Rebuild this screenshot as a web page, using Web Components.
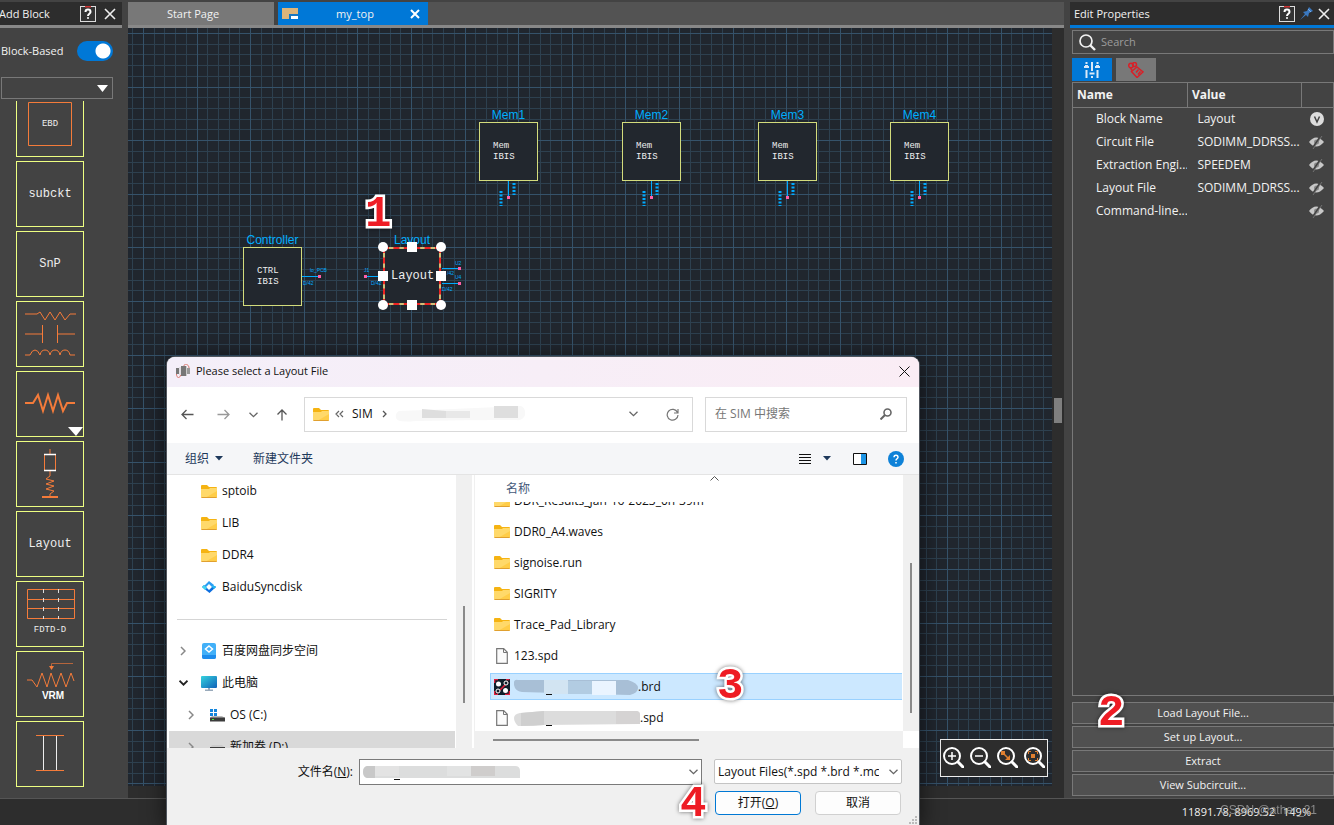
<!DOCTYPE html>
<html lang="zh-CN">
<head>
<meta charset="utf-8">
<title>Block Editor</title>
<style>
  body { margin: 0; font: 11px/16px "Open Sans", "Noto Sans CJK SC", sans-serif; }
</style>
</head>
<body>
<app-shell></app-shell>

<script>
const base = `<style>
  *, *::before, *::after { box-sizing: border-box; }
  button, input, select { font: inherit; color: inherit; margin: 0; padding: 0; border: 0; background: none; border-radius: 0; outline: none; }
  svg { display: block; flex: none; }
  ul { list-style: none; margin: 0; padding: 0; }
</style>`;

function define(name, html, setup) {
  const template = document.createElement('template');
  template.innerHTML = base + html;
  customElements.define(name, class extends HTMLElement {
    constructor() {
      super();
      this.attachShadow({ mode: 'open' }).append(template.content.cloneNode(true));
    }
    connectedCallback() { if (setup) setup(this, this.shadowRoot); }
  });
}

/* ---------- icon library ---------- */
const lens = '<circle cx="9" cy="9" r="8" fill="none" stroke="#fff" stroke-width="2"/><path d="M15 15l5 5" stroke="#fff" stroke-width="3" stroke-linecap="round"/>';
const icons = {
  help: [16, 16, '<rect x=".5" y=".5" width="15" height="15" fill="#333" stroke="#ddd"/><path d="M5 0h6v1.500H5z" fill="#c33"/><path d="M5.500 6c0-3.200 5-3.200 5 0 0 1.700-2.500 1.800-2.500 4M8 11.300v1.500" fill="none" stroke="#fff" stroke-width="2"/>'],
  close: [12, 12, '<path d="M1 1l10 10M11 1L1 11" stroke="#eee" stroke-width="1.600"/>'],
  closeTab: [10, 10, '<path d="M1 1l8 8M9 1L1 9" stroke="#fff" stroke-width="2"/>'],
  closeDark: [11, 11, '<path d="M.5 .5l10 10M10.500 .5l-10 10" stroke="#111"/>'],
  doc: [16, 12, '<path d="M0 0h16v6H7v5H0z" fill="#deb57a"/><path d="M8 11V7h8" fill="none" stroke="#37a" stroke-width="1"/><path d="M9 8h7v3H9z" fill="#fff"/>'],
  pin: [13, 13, '<path d="M0 13l5-6-2-2 4-1L9 0l4 4-4 2-1 4-2-2z" fill="#3a78c0"/><path d="M8 2l3 3" stroke="#7ab0e8"/>'],
  search: [17, 17, '<circle cx="7" cy="7" r="6" fill="none" stroke="#f2f2f2" stroke-width="1.700"/><path d="M11 11l5 5" stroke="#f2f2f2" stroke-width="2.400"/>'],
  sliders: [16, 16, '<path d="M2.500 0v2M2.500 8v8M8 0v9M8 14v2M13.500 0v2M13.500 8v8" stroke="#dbe9f8" stroke-width="2"/><path d="M0 5h5M1 4h3M5.500 11.500h5M11 5h5M12 4h3" stroke="#dbe9f8" stroke-width="2"/>'],
  circuit: [16, 16, '<g fill="none" stroke="#d82028" stroke-width="1.500"><path d="M9 5l6 5-6 5.500-5.500-6z"/><path d="M8 10.500l2.500-3M10 12.500l2.500-3"/><circle cx="3" cy="3.500" r="2.300"/><circle cx="6.500" cy="2.500" r="2"/><path d="M2.500 6l2 3"/></g>'],
  visible: [14, 14, '<circle cx="7" cy="7" r="7" fill="#ddd"/><path d="M4.500 4.500L7 10l2.500-5.500" fill="none" stroke="#444" stroke-width="1.500"/>'],
  hidden: [16, 14, '<path d="M0 7q7-9 15 0-8 9-15 0z" fill="#c8c8c8"/><circle cx="7.500" cy="7" r="2.500" fill="#888"/><path d="M12.500 0L3 14" stroke="#434343" stroke-width="2"/><path d="M13 1L4 14" stroke="#888" stroke-width=".7"/>'],
  zoomIn: [21, 21, lens + '<path d="M5 9h8M9 5v8" stroke="#fff" stroke-width="1.500"/>'],
  zoomOut: [21, 21, lens + '<path d="M5 9h8" stroke="#fff" stroke-width="1.500"/>'],
  zoomWin: [21, 21, lens + '<path d="M6 6l6 6" stroke="#e08030" stroke-width="1.500"/><path d="M4 4h4v4H4zM13 8v5H8z" fill="#e08030"/>'],
  zoomFit: [21, 21, lens + '<path d="M7 7h4v4H7z" fill="#e08030"/><path d="M4.500 7V4.500H7M11 4.500h2.500V7M13.500 11v2.500H11M7 13.500H4.500V11" fill="none" stroke="#e08030"/>'],
  app: [16, 14, '<path d="M1 4h3v6H1zM6 2h5v10H6z" fill="#777"/><path d="M12 4h3v6h-3z" fill="#999"/><path d="M5 3v8M11.500 2v10" stroke="#ccc"/><path d="M9 2c0-3 5-2 5 2M1.500 10c0 5 4 4 4 1" fill="none" stroke="#d9776c"/>'],
  back: [13, 11, '<path d="M12.500 5.500H1M5.500 1L1 5.500 5.500 10" fill="none" stroke="#555" stroke-width="1.300"/>'],
  forward: [13, 11, '<path d="M.5 5.500H12M7.500 1L12 5.500 7.500 10" fill="none" stroke="#999" stroke-width="1.300"/>'],
  up: [12, 12, '<path d="M6 11.500V1M1.500 5.500L6 1l4.500 4.500" fill="none" stroke="#555" stroke-width="1.300"/>'],
  chevron: [9, 6, '<path d="M.5 .7l4 4 4-4" fill="none" stroke="#666" stroke-width="1.300"/>'],
  chevronUp: [9, 5, '<path d="M.5 4.500l4-4 4 4" fill="none" stroke="#555"/>'],
  chevronBold: [9, 6, '<path d="M.5 .7l4 4 4-4" fill="none" stroke="#222" stroke-width="1.800"/>'],
  chevronRight: [6, 10, '<path d="M1 1l4 4-4 4" fill="none" stroke="#888" stroke-width="1.500"/>'],
  crumb: [5, 8, '<path d="M1 1l3 3-3 3" fill="none" stroke="#555" stroke-width="1.300"/>'],
  crumbs: [9, 8, '<path d="M4 1L1 4l3 3M8 1L5 4l3 3" fill="none" stroke="#666" stroke-width="1.200"/>'],
  refresh: [13, 13, '<path d="M11.500 4.500A5.400 5.400 0 1 0 12 7M12 1v4H8" fill="none" stroke="#777" stroke-width="1.200"/>'],
  find: [12, 12, '<circle cx="7.500" cy="4.500" r="3.500" fill="none" stroke="#666" stroke-width="1.600"/><path d="M5 7l-4.500 4.500" stroke="#666" stroke-width="2"/>'],
  caret: [8, 5, '<path d="M0 0h8L4 4.500z" fill="#1e395b"/>'],
  caretWhite: [11, 7, '<path d="M0 0h11L5.500 7z" fill="#fff"/>'],
  lines: [12, 11, '<path d="M0 1h12M0 4h12M0 7h12M0 10h12" stroke="#111" stroke-width="1" shape-rendering="crispEdges"/>'],
  pane: [14, 12, '<path d="M.5 .5h13v11H.5z" fill="#fff" stroke="#111"/><path d="M8 1h5v10H8z" fill="#1c95e6"/>'],
  info: [16, 16, '<circle cx="8" cy="8" r="8" fill="#0f82d8"/><path d="M6 6.300c0-2.900 4-2.900 4 0 0 1.500-2 1.500-2 3.200M8 11v1.600" fill="none" stroke="#fff" stroke-width="1.500"/>'],
  folder: [16, 13, '<path d="M0 1q0-1 1-1h5l2 2h7q1 0 1 1v9H0z" fill="#f5b312"/><path d="M0 4h8l1-1h7v9q0 1-1 1H1q-1 0-1-1z" fill="#ffd96a"/><path d="M16 6v6q0 1-1 1H4z" fill="#ffcd48"/><path d="M.5 12.500h15" stroke="#e0a030"/>'],
  file: [12, 16, '<path d="M.7 .7h7l3.600 3.600v11H.7z" fill="#fbfbfb" stroke="#777" stroke-width="1.200"/><path d="M7.500 1v3.500H11" fill="none" stroke="#777"/>'],
  board: [16, 16, '<path d="M0 0h16v16H0z" fill="#101e2a"/><path d="M.5 4V.5H4M12 .5h3.500M15.500 12v3.500H11M4 15.500H.5V12M3 14L14 3" fill="none" stroke="#e01f3c" stroke-width="1.500"/><circle cx="4.500" cy="5" r="2.500" fill="#fff"/><circle cx="11.500" cy="11.500" r="2.500" fill="#fff"/><circle cx="12" cy="4" r="2" fill="#101e2a" stroke="#fff"/><circle cx="4" cy="12" r="2" fill="#101e2a" stroke="#fff"/>'],
  sync: [14, 12, '<path d="M2 5l5-5 5 4-2 2-3-3-3 3z" fill="#2a9df4"/><path d="M0 6l2-2 5 5 3-3 3-1 1 1-6.500 6z" fill="#0e6fe0"/><path d="M0 6l2-2 3 3-2 2z" fill="#40d4f0"/><path d="M11 4l3 2-2 2-2-2z" fill="#20b8f0"/>'],
  syncDrive: [14, 16, '<rect width="14" height="16" rx="2" fill="#42b0f8"/><path d="M0 12h14v2q0 2-2 2H2q-2 0-2-2z" fill="#1e8cec"/><path d="M7 3l3.500 3L7 9 3.500 6z" fill="none" stroke="#fff" stroke-width="1.500"/>'],
  computer: [16, 15, '<defs><linearGradient id="g" x2="1" y2="1"><stop stop-color="#35d3de"/><stop offset="1" stop-color="#1161b8"/></linearGradient></defs><rect width="16" height="12" rx="1" fill="url(#g)"/><path d="M7 12h2v2H7zM4 13.500h8V15H4z" fill="#9ab"/>'],
  osDrive: [16, 13, '<path d="M1 0h3v3H1zM5 0h3v3H5zM1 4h3v3H1zM5 4h3v3H5z" fill="#1485dc"/><path d="M3 7h10l3 2H1z" fill="#bbb"/><path d="M1 8.500h15v4H1z" fill="#3c3c3c"/><path d="M3 10.500h2" stroke="#4e4"/>'],
  drive: [16, 13, '<path d="M3 4h10l3 3H1z" fill="#ccc"/><path d="M1 6h15v5H1z" fill="#3c3c3c"/>'],
};
define('ui-icon', `<style>:host { display: inline-block; flex: none; vertical-align: middle; }</style>`, (host, root) => {
  const icon = icons[host.getAttribute('name')];
  if (!icon) return;
  const [w, h, body] = icon;
  root.innerHTML += `<svg width="${w}" height="${h}" viewBox="0 0 ${w} ${h}" aria-hidden="true">${body}</svg>`;
});

/* ---------- palette ---------- */
const symbols = {
  ebd: '<path d="M11.500 10.500h43v43h-43z"/>',
  rcl: '<path d="M8 12h12l3-2 5 8 5-8 5 8 5-8 5 8 5-6h6"/><path d="M8 32h17.500M25.500 23v18M40.500 23v18M40.500 32H58"/><path d="M8 53h5q2-5 5-5t5 5q1-5 5-5t5 5q1-5 5-5t5 5q1-5 5-5t5 5h5"/>',
  res: '<g stroke-width="2"><path d="M8 31h8l5-8 5 16 5-16 5 16 5-16 5 16 4-8h8"/></g><path d="M51 55h15l-7 9z" fill="#fff" stroke="none"/>',
  probe: '<path d="M33 7v5M27.500 13v16M38.500 13v16" /><path d="M33 29v5l-4 3 8 2-8 3 8 2-8 3 8 2-4 3v3" /><path d="M25 55h16" stroke-width="2"/><path d="M27 12.500h12M27 28.500h12" stroke="#fff" stroke-width="1.500"/>',
  fdtd: '<path d="M10.500 7.500h47v29h-47zM10 17.500h48M10 26.500h48"/><path d="M26.500 7v30M41.500 7v30" stroke="#ddd" stroke-dasharray="4 5"/>',
  vrm: '<path d="M10 28h5l5 7 5-14 5 14 4-14 5 14 5-14 5 14 5-14 3 8"/><path d="M56 11.500H34.500V15" stroke="#b5653c"/><path d="M32 14h5l-2.500 4z" fill="#f47b3a" stroke="none"/>',
  pair: '<path d="M26.500 14v34M39.500 14v34" stroke="#eee"/><path d="M19 13.500h28M19 48.500h28"/>',
  none: '',
};
define('palette-block', `<style>
  :host { display: block; width: 68px; height: 66px; flex: none; }
  button { display: grid; place-items: center; width: 100%; height: 100%; border: 1px solid #eeff82; color: #eee; font: 12px/16px "Liberation Mono", monospace; }
  button > * { grid-area: 1 / 1; }
  :host([small]) button { font-size: 9px; }
  :host([low]) .label { align-self: end; padding-bottom: 8px; }
  :host([strong]) .label { padding: 0 0 12px 6px; font: bold 10px/16px "Liberation Sans", sans-serif; color: #fff; }
</style>
<button type="button"><svg width="66" height="64" fill="none" stroke="#f47b3a"></svg><span class="label"><slot></slot></span></button>`,
(host, root) => { root.querySelector('svg').innerHTML = symbols[host.getAttribute('symbol') || 'none']; });

define('panel-header', `<style>
  :host { display: flex; align-items: center; gap: var(--tool-gap, 8px); height: 26px; margin-top: 2px; padding: 0 var(--tool-end, 6px) 0 4px; background: #2d2d2d; border-bottom: 3px solid var(--rule, #888); color: #f2f2f2; }
  h2 { flex: 1; margin: 0; font: inherit; white-space: nowrap; }
</style><h2><slot></slot></h2><slot name="tools"></slot>`);

define('block-palette', `<style>
  :host { display: flex; flex-direction: column; min-height: 0; padding-right: 6px; background: #434343; color: #f2f2f2; overflow: hidden; }
  panel-header { padding-left: 0; }
  panel-header span { margin-left: -1px; }
  .mode { display: flex; align-items: center; justify-content: space-between; height: 45px; padding: 0 9px 0 1px; }
  .mode input { appearance: none; width: 36px; height: 20px; border-radius: 10px; background: radial-gradient(circle at 26px 10px, #fff 7px, #0078d7 8px); }
  .filter { position: relative; display: block; margin: 4px 9px 0 1px; }
  .filter select { appearance: none; display: block; width: 100%; height: 22px; border: 1px solid #787878; }
  .filter ui-icon { position: absolute; right: 5px; top: 8px; pointer-events: none; }
  .list { flex: 1; min-height: 0; margin-top: 2px; overflow: hidden; }
  .blocks { display: flex; flex-direction: column; gap: 4px; margin: -10px 0 0 16px; }
</style>
<panel-header><span>Add Block</span><ui-icon slot="tools" name="help"></ui-icon><ui-icon slot="tools" name="close"></ui-icon></panel-header>
<div class="mode"><label for="mode">Block-Based</label><input id="mode" type="checkbox" role="switch" checked></div>
<label class="filter"><select aria-label="Block filter"><option></option></select><ui-icon name="caretWhite"></ui-icon></label>
<div class="list"><div class="blocks">
  <palette-block symbol="ebd" small>EBD</palette-block>
  <palette-block>subckt</palette-block>
  <palette-block>SnP</palette-block>
  <palette-block symbol="rcl"></palette-block>
  <palette-block symbol="res"></palette-block>
  <palette-block symbol="probe"></palette-block>
  <palette-block>Layout</palette-block>
  <palette-block symbol="fdtd" small low>FDTD-D</palette-block>
  <palette-block symbol="vrm" low strong>VRM</palette-block>
  <palette-block symbol="pair"></palette-block>
</div></div>`);

/* ---------- document tabs ---------- */
define('doc-tabs', `<style>
  :host { display: flex; height: 26px; margin-top: 2px; gap: 4px; border-bottom: 3px solid #888; color: #f2f2f2; background: #535353; }
  button { display: flex; align-items: center; justify-content: center; background: #787878; }
  .start { width: 146px; padding-right: 16px; box-shadow: 4px 0 #434343; }
  .open { width: 150px; padding: 0 8px 0 4px; background: #0078d7; }
  .open span { flex: 1; text-align: center; padding-left: 2px; }
</style>
<button type="button" class="start">Start Page</button>
<button type="button" class="open"><ui-icon name="doc"></ui-icon><span>my_top</span><ui-icon name="closeTab"></ui-icon></button>`);

/* ---------- canvas ---------- */
const pins = {
  mem: '<path d="M29.500 59v16" stroke="#0af"/><path d="M28 74h3v3h-3z" fill="#ff5fa8"/><path d="M35 61v12M22 69v15" stroke="#0af" stroke-width="3" stroke-dasharray="2 1.500"/>',
  ctrl: '<path d="M59 29.500h17" stroke="#0af"/><path d="M75 28h3v3h-3z" fill="#ff5fa8"/><text x="67" y="25">lo_PCB</text><text x="60" y="38">D/42</text>',
  layout: '<path d="M-17 29.500H0M59 21.500h17M59 36.500h17" stroke="#0af"/><path d="M-19 28h3v3h-3zM75 20h3v3h-3zM75 35h3v3h-3z" fill="#ff5fa8"/><text x="-19" y="25">J1</text><text x="-12" y="38">D/42</text><text x="72" y="18">U2</text><text x="72" y="32">U4</text><text x="64" y="28">/42</text><text x="59" y="44">D/42</text>',
};
define('canvas-node', `<style>
  :host { position: absolute; width: 59px; height: 59px; }
  .name { position: absolute; inset: auto 50% 100% auto; transform: translateX(50%); font: 12px/14px "Liberation Sans", sans-serif; color: #00aeff; white-space: nowrap; }
  .box { display: grid; place-items: center start; width: 100%; height: 100%; padding-left: 13px; border: 1px solid #d3dc7c; background: #22272e; color: #eee; font: 9px/11px "Liberation Mono", monospace; white-space: pre; }
  :host([selected]) { width: 58px; height: 58px; }
  :host([selected]) .box { padding-left: 6px; font-size: 12px; border: 2px dashed #ee2222; background: linear-gradient(#22272e, #22272e) padding-box, #cfc078 border-box; }
  svg { position: absolute; inset: 0 auto auto 0; overflow: visible; fill: none; }
  text { font: 5px "Liberation Sans", sans-serif; fill: #0af; }
</style>
<div class="box"><slot></slot></div><svg width="59" height="59"></svg><div class="name"></div><svg class="grips" width="59" height="59"></svg>`, (host, root) => {
  host.style.left = host.getAttribute('x') + 'px';
  host.style.top = host.getAttribute('y') + 'px';
  root.querySelector('.name').textContent = host.getAttribute('label');
  root.querySelector('svg').innerHTML = pins[host.getAttribute('pins')];
  if (host.hasAttribute('selected')) {
    const stops = [0, 29, 58];
    let grips = '';
    for (const x of stops) for (const y of stops) {
      if (x === 29 && y === 29) continue;
      grips += x === 29 || y === 29
        ? `<rect x="${x - 5}" y="${y - 5}" width="10" height="10" fill="#fff"/>`
        : `<circle cx="${x}" cy="${y}" r="5" fill="#fff"/>`;
    }
    root.querySelector('.grips').innerHTML = grips;
  }
});

define('zoom-bar', `<style>
  :host { display: flex; align-items: center; gap: 6px; height: 38px; padding: 0 2px 2px; border: 1px solid #eee; background: #2d2d2d; box-sizing: border-box; }
  button { display: block; }
</style>
<button type="button" aria-label="Zoom in"><ui-icon name="zoomIn"></ui-icon></button>
<button type="button" aria-label="Zoom out"><ui-icon name="zoomOut"></ui-icon></button>
<button type="button" aria-label="Zoom to area"><ui-icon name="zoomWin"></ui-icon></button>
<button type="button" aria-label="Zoom to fit"><ui-icon name="zoomFit"></ui-icon></button>`);

define('design-canvas', `<style>
  :host { flex: 1; min-height: 0; display: flex; background: #2d2d2d; padding-bottom: 12px; }
  .sheet { position: relative; flex: 1; overflow: hidden; background: #20262e; }
  .grid { width: 100%; height: 100%; shape-rendering: crispEdges; fill: none; }
  .minor { stroke: #2d404f; } .major { stroke: #35526a; }
  .rail { width: 12px; display: grid; place-items: center; padding-top: 7px; }
  .handle { width: 8px; height: 25px; background: #7f7f7f; }
  zoom-bar { position: absolute; right: 4px; bottom: 9px; }
</style>
<div class="sheet"><svg class="grid"><path class="minor"/><path class="major"/></svg>
  <canvas-node x="351" y="94" label="Mem1" pins="mem">Mem
IBIS</canvas-node>
  <canvas-node x="494" y="94" label="Mem2" pins="mem">Mem
IBIS</canvas-node>
  <canvas-node x="630" y="94" label="Mem3" pins="mem">Mem
IBIS</canvas-node>
  <canvas-node x="762" y="94" label="Mem4" pins="mem">Mem
IBIS</canvas-node>
  <canvas-node x="115" y="219" label="Controller" pins="ctrl">CTRL
IBIS</canvas-node>
  <canvas-node x="255" y="219" label="Layout" pins="layout" selected>Layout</canvas-node>
  <zoom-bar></zoom-bar>
</div><div class="rail"><div class="handle"></div></div>`, (host, root) => {
  const step = 10.72, reach = 4000;
  let minor = '', major = '';
  for (let i = -1; i * step < reach; i++) {
    const x = Math.round(15 + i * step) + .5, y = Math.round(5 + i * step) + .5;
    const d = `M${x} 0V${reach}M0 ${y}H${reach}`;
    if (i % 5) minor += d; else major += d;
  }
  root.querySelector('.minor').setAttribute('d', minor);
  root.querySelector('.major').setAttribute('d', major);
});

/* ---------- properties ---------- */
define('properties-panel', `<style>
  :host { display: flex; flex-direction: column; min-height: 0; margin-left: 6px; background: #434343; color: #f2f2f2; }
  panel-header { --rule: #0078d7; --tool-gap: 5px; --tool-end: 4px; }
  .content { flex: 1; min-height: 0; display: flex; flex-direction: column; padding: 2px 0 2px 2px; }
  .search { display: flex; align-items: center; gap: 5px; height: 24px; padding: 0 6px; border: 1px solid #787878; }
  .search input { flex: 1; min-width: 0; }
  .search input::placeholder { color: #9c9c9c; opacity: 1; }
  .views { display: flex; gap: 4px; margin: 4px 0 1px; }
  .views button { display: grid; place-items: center; width: 40px; height: 23px; background: #787878; }
  .views button:first-child { background: #0078d7; }
  .props { flex: 1; min-height: 0; border: 1px solid #787878; }
  table { width: 100%; table-layout: fixed; border-collapse: collapse; font-size: 12px; }
  th { height: 24px; padding: 0 4px; border-bottom: 1px solid #787878; text-align: left; font-weight: 700; }
  th + th { border-left: 1px solid #787878; }
  td { height: 23px; padding: 0 4px 0 10px; overflow: hidden; white-space: nowrap; }
  td:first-child { padding: 0 0 0 23px; }
  td:last-child { padding: 0; text-align: center; line-height: 1; }
  .actions { display: grid; gap: 2px; margin-top: 6px; }
  .actions button { height: 22px; border: 1px solid #787878; background: #505050; }
</style>
<panel-header>Edit Properties<ui-icon slot="tools" name="help"></ui-icon><ui-icon slot="tools" name="pin"></ui-icon><ui-icon slot="tools" name="close"></ui-icon></panel-header>
<div class="content">
  <label class="search"><ui-icon name="search"></ui-icon><input type="text" placeholder="Search" aria-label="Search"></label>
  <div class="views"><button type="button" aria-label="Properties"><ui-icon name="sliders"></ui-icon></button><button type="button" aria-label="Circuit"><ui-icon name="circuit"></ui-icon></button></div>
  <div class="props"><table>
    <colgroup><col style="width:44%"><col style="width:44%"><col></colgroup>
    <thead><tr><th>Name</th><th>Value</th><th></th></tr></thead>
    <tbody>
      <tr><td>Block Name</td><td>Layout</td><td><ui-icon name="visible"></ui-icon></td></tr>
      <tr><td>Circuit File</td><td>SODIMM_DDRSS...</td><td><ui-icon name="hidden"></ui-icon></td></tr>
      <tr><td>Extraction Engi...</td><td>SPEEDEM</td><td><ui-icon name="hidden"></ui-icon></td></tr>
      <tr><td>Layout File</td><td>SODIMM_DDRSS...</td><td><ui-icon name="hidden"></ui-icon></td></tr>
      <tr><td>Command-line...</td><td></td><td><ui-icon name="hidden"></ui-icon></td></tr>
    </tbody>
  </table></div>
  <div class="actions">
    <button type="button">Load Layout File...</button>
    <button type="button">Set up Layout...</button>
    <button type="button">Extract</button>
    <button type="button">View Subcircuit...</button>
  </div>
</div>`);

define('status-bar', `<style>
  :host { position: relative; box-sizing: border-box; display: flex; align-items: center; justify-content: flex-end; gap: 8px; height: 27px; padding-right: 23px; border-top: 1px solid #555; background: #2d2d2d; color: #f2f2f2; }
  .credit { position: absolute; right: 17px; top: 2px; font: 12px/18px "Liberation Sans", sans-serif; color: #a0a0a0; opacity: .8; }
</style><span>11891.78, 8969.52</span><span>149%</span><span class="credit">CSDN @ather_21</span>`);

define('step-marker', `<style>
  :host { position: absolute; font: bold 44px/46px "Liberation Mono", monospace; color: #ee1c24; -webkit-text-stroke: 5px #fff; paint-order: stroke fill; filter: drop-shadow(0 0 2px #0008); pointer-events: none; }
</style><slot></slot>`);

/* ---------- file dialog ---------- */
define('tree-item', `<style>
  :host { box-sizing: border-box; display: flex; align-items: center; gap: 5px; height: 32px; padding-left: 34px; }
  ui-icon { width: 16px; display: grid; place-items: center; }
  .twist { width: 10px; margin: 0 8px 0 -23px; }
  :host([nested]) { padding-left: 42px; }
  :host([current]) { margin: 0 1px 0 2px; padding-left: 40px; background: #d9d9d9; }
</style><slot></slot>`, (host, root) => {
  const twist = host.getAttribute('twist');
  root.querySelector('slot').insertAdjacentHTML('beforebegin',
    (twist ? `<ui-icon class="twist" name="${twist}"></ui-icon>` : '') + `<ui-icon name="${host.getAttribute('icon')}"></ui-icon>`);
});
define('file-row', `<style>
  :host { box-sizing: border-box; display: flex; align-items: center; gap: 4px; height: 27px; padding-left: 3px; border: 1px solid transparent; white-space: nowrap; }
  :host([selected]) { background: #cce8ff; border-color: #99d1ff; border-right: 0; }
  ui-icon { width: 16px; display: grid; place-items: center; }
  .name { display: flex; align-items: center; }
</style><span class="name"><slot></slot></span>`, (host, root) => {
  root.querySelector('.name').insertAdjacentHTML('beforebegin', `<ui-icon name="${host.getAttribute('icon')}"></ui-icon>`);
});

const smudges = {
  path: [131, 18, '<path d="M4 6q60-2 122-5 5 2 4 9-2 6-9 5-50 0-100 1Q2 18 1 13t3-7z" fill="#f8f8f8"/><path d="M27 4l24 2v7H27zM99 1h24v12H99z" fill="#dedede"/><path d="M51 6h24v7H51z" fill="#e8e8e8"/>'],
  brd: [124, 16, '<path d="M4 1h110q10 3 10 8t-8 7l-40-1-68-2Q1 12 0 6t4-5z" fill="#a8bfd6"/><path d="M30 1h24v14H30z" fill="#d2e4f2"/><path d="M54 2h24v13H54z" fill="#b2cce2"/><path d="M78 2h24v14H78z" fill="#eaf4ff"/><path d="M32 15.500h6" stroke="#111"/>'],
  spd: [126, 16, '<path d="M6 3L30 1h92q4 0 4 4v9L30 15q-20 2-26 1Q0 12 0 8t6-5z" fill="#dcdcdc"/><path d="M7 3l23-2v14L7 16z" fill="#cfcfcf"/><path d="M102 1h20q4 0 4 4v9h-24z" fill="#d5d3d3"/><path d="M32 15.500h6" stroke="#111"/>'],
  name: [158, 15, '<path d="M4 1h148q5 0 5 5v7H4Q0 12 0 7t4-6z" fill="#dcdddd"/><path d="M4 1h8v12H4Q0 12 0 7t4-6z" fill="#c8c8c8"/><path d="M12 1h24v10H12z" fill="#e3e3e3"/><path d="M84 1h24v10H84z" fill="#e2e3e3"/><path d="M108 1h24v10h-24z" fill="#cfcdcc"/><path d="M31 14.500h6" stroke="#111"/>'],
};
define('blur-patch', `<style>:host { display: block; flex: none; }</style>`, (host, root) => {
  const [w, h, body] = smudges[host.getAttribute('kind')];
  root.innerHTML += `<svg width="${w}" height="${h}" aria-hidden="true">${body}</svg>`;
});

define('file-dialog', `<style>
  :host { position: absolute; display: flex; flex-direction: column; background: #fff; color: #111; font-size: 12px; border-radius: 8px 8px 0 0; overflow: hidden; box-shadow: 0 0 0 1px #50565e, 0 4px 24px #000a; }
  .title { display: flex; align-items: center; gap: 5px; height: 30px; padding: 0 9px 2px 8px; background: linear-gradient(90deg, #f4eff9, #faedf5); font-size: 11px; }
  .title h1 { flex: 1; margin: 0; font: inherit; }
  .nav { display: flex; align-items: center; height: 56px; padding: 0 12px 2px 14px; }
  .nav .back { margin-right: 23px; }
  .nav .fwd { margin-right: 19px; }
  .nav .recent { margin-right: 18px; }
  .nav button { display: block; }
  .address { flex: 1; display: flex; align-items: center; height: 35px; margin: 0 12px 0 16px; padding: 0 13px 0 8px; border: 1px solid #d9d9d9; }
  .address > * { margin-right: 6px; }
  .address .crumb { margin: 0 8px 0 2px; display: flex; align-items: center; gap: 9px; }
  .address .drop { margin: 0 28px 0 auto; }
  .address .refresh { margin: 0; }
  .find { display: flex; align-items: center; width: 202px; height: 35px; padding: 0 14px 0 9px; border: 1px solid #d9d9d9; }
  .find input { flex: 1; min-width: 0; }
  .find input::placeholder { color: #767676; opacity: 1; }
  .tools { display: flex; align-items: center; height: 32px; padding: 0 15px 0 18px; background: #f5f6f8; border-bottom: 1px solid #e4e4e4; color: #1e395b; }
  .tools button { display: flex; align-items: center; gap: 6px; }
  .tools .new { margin: 0 auto 0 30px; }
  .tools .view { gap: 12px; margin-right: 22px; }
  .tools .pane { margin-right: 21px; }
  .panes { flex: 1; min-height: 0; display: grid; grid-template-columns: 289px 16px 1fr; }
  .tree { overflow: hidden; height: 100%; min-height: 0; }
  .tree hr { height: 1px; margin: 16px 9px 15px 10px; border: 0; background: #d5d5d5; }
  .vbar { display: flex; justify-content: center; background: #f0f0f0; }
  .vbar i { width: 2px; height: 97px; margin-top: 131px; background: #8a8a8a; }
  .files { min-width: 0; min-height: 0; display: grid; grid-template: minmax(0, 1fr) 17px / minmax(0, 1fr) 16px; margin-left: 2px; border-left: 1px solid #f0f0f0; }
  .files .vbar i { height: 150px; margin-top: 88px; }
  .list { display: flex; flex-direction: column; min-height: 0; overflow: hidden; }
  .head { position: relative; flex: none; height: 27px; padding: 6px 0 0 31px; color: #44597a; }
  .head ui-icon { position: absolute; left: 55%; top: 1px; line-height: 0; }
  .rows { flex: 1; min-height: 0; overflow: hidden; }
  .rows > div { display: grid; gap: 4px; margin: -15px 1px 0 15px; }
  .hbar { display: flex; align-items: center; background: #f0f0f0; }
  .hbar i { width: 206px; height: 2px; margin-left: 18px; background: #8a8a8a; }
  .foot { position: relative; display: grid; grid-template-columns: 1fr 343px 188px; gap: 6px 12px; align-items: start; padding: 11px 17px 10px; background: #f0f0f0; }
  .foot > label { justify-self: end; margin: 5px -6px 0 0; }
  .field { position: relative; }
  .field input, .field select { appearance: none; display: block; width: 100%; height: 26px; padding: 0 22px 0 3px; border: 1px solid #7a7a7a; background: #fff; text-overflow: clip; }
  .field select { height: 25px; border-color: #c4c4c4; border-radius: 2px; }
  .field ui-icon { position: absolute; right: 4px; top: 10px; pointer-events: none; line-height: 0; }
  .field blur-patch { position: absolute; left: 4px; top: 6px; }
  .buttons { grid-column: 3; display: grid; grid-template-columns: 1fr 1fr; gap: 14px; padding: 0 1px; }
  .buttons button { height: 24px; border: 1px solid #d0d0d0; border-radius: 4px; background: #fdfdfd; }
  .buttons .ok { border-color: #0078d4; }
  .grip { position: absolute; right: 1px; bottom: 1px; }
</style>
<div class="title"><ui-icon name="app"></ui-icon><h1>Please select a Layout File</h1><ui-icon name="closeDark"></ui-icon></div>
<div class="nav">
  <button type="button" class="back" aria-label="Back"><ui-icon name="back"></ui-icon></button>
  <button type="button" class="fwd" aria-label="Forward"><ui-icon name="forward"></ui-icon></button>
  <button type="button" class="recent" aria-label="Recent"><ui-icon name="chevron"></ui-icon></button>
  <button type="button" aria-label="Up"><ui-icon name="up"></ui-icon></button>
  <div class="address"><ui-icon name="folder"></ui-icon><ui-icon name="crumbs"></ui-icon><span class="crumb">SIM<ui-icon name="crumb"></ui-icon></span><blur-patch kind="path"></blur-patch><ui-icon class="drop" name="chevron"></ui-icon><ui-icon class="refresh" name="refresh"></ui-icon></div>
  <label class="find"><input type="text" placeholder="在 SIM 中搜索" aria-label="Search"><ui-icon name="find"></ui-icon></label>
</div>
<div class="tools">
  <button type="button">组织<ui-icon name="caret"></ui-icon></button>
  <button type="button" class="new">新建文件夹</button>
  <button type="button" class="view" aria-label="View"><ui-icon name="lines"></ui-icon><ui-icon name="caret"></ui-icon></button>
  <button type="button" class="pane" aria-label="Preview pane"><ui-icon name="pane"></ui-icon></button>
  <button type="button" aria-label="Help"><ui-icon name="info"></ui-icon></button>
</div>
<div class="panes">
  <div class="tree">
    <tree-item icon="folder">sptoib</tree-item>
    <tree-item icon="folder">LIB</tree-item>
    <tree-item icon="folder">DDR4</tree-item>
    <tree-item icon="sync">BaiduSyncdisk</tree-item>
    <hr>
    <tree-item icon="syncDrive" twist="chevronRight">百度网盘同步空间</tree-item>
    <tree-item icon="computer" twist="chevronBold">此电脑</tree-item>
    <tree-item icon="osDrive" twist="chevronRight" nested>OS (C:)</tree-item>
    <tree-item icon="drive" twist="chevronRight" nested current>新加卷 (D:)</tree-item>
  </div>
  <div class="vbar"><i></i></div>
  <div class="files">
    <div class="list">
      <div class="head">名称<ui-icon name="chevronUp"></ui-icon></div>
      <div class="rows"><div>
        <file-row icon="folder">DDR_Results_Jan-16-2023_0h-39m</file-row>
        <file-row icon="folder">DDR0_A4.waves</file-row>
        <file-row icon="folder">signoise.run</file-row>
        <file-row icon="folder">SIGRITY</file-row>
        <file-row icon="folder">Trace_Pad_Library</file-row>
        <file-row icon="file">123.spd</file-row>
        <file-row icon="board" selected><blur-patch kind="brd"></blur-patch>.brd</file-row>
        <file-row icon="file"><blur-patch kind="spd"></blur-patch>.spd</file-row>
      </div></div>
    </div>
    <div class="vbar"><i></i></div>
    <div class="hbar"><i></i></div>
  </div>
</div>
<div class="foot">
  <label for="name">文件名(<u>N</u>):</label>
  <div class="field"><input id="name" type="text"><blur-patch kind="name"></blur-patch><ui-icon name="chevron"></ui-icon></div>
  <div class="field"><select aria-label="File type"><option>Layout Files(*.spd *.brd *.mc</option></select><ui-icon name="chevron"></ui-icon></div>
  <div class="buttons"><button type="button" class="ok">打开(<u>O</u>)</button><button type="button">取消</button></div>
  <svg class="grip" width="10" height="8" fill="#bbb"><path d="M7 0h2v2H7zM4 3h2v2H4zM7 3h2v2H7zM1 6h2v2H1zM4 6h2v2H4zM7 6h2v2H7z"/></svg>
</div>`);

define('app-shell', `<style>
  :host { position: relative; display: grid; grid-template: minmax(0, 1fr) auto / 128px minmax(0, 1fr) 270px; height: 100vh; overflow: hidden; background: #434343; }
  main { display: flex; flex-direction: column; min-width: 0; min-height: 0; }
  status-bar { grid-column: 1 / -1; }
  file-dialog { left: 167px; top: 357px; bottom: 0; width: 752px; }
</style>
<block-palette></block-palette>
<main><doc-tabs></doc-tabs><design-canvas></design-canvas></main>
<properties-panel></properties-panel>
<status-bar></status-bar>
<file-dialog></file-dialog>
<step-marker style="left:365px;top:191px">1</step-marker>
<step-marker style="left:1098px;top:690px">2</step-marker>
<step-marker style="left:717px;top:663px">3</step-marker>
<step-marker style="left:680px;top:781px">4</step-marker>`);
</script>
</body>
</html>
